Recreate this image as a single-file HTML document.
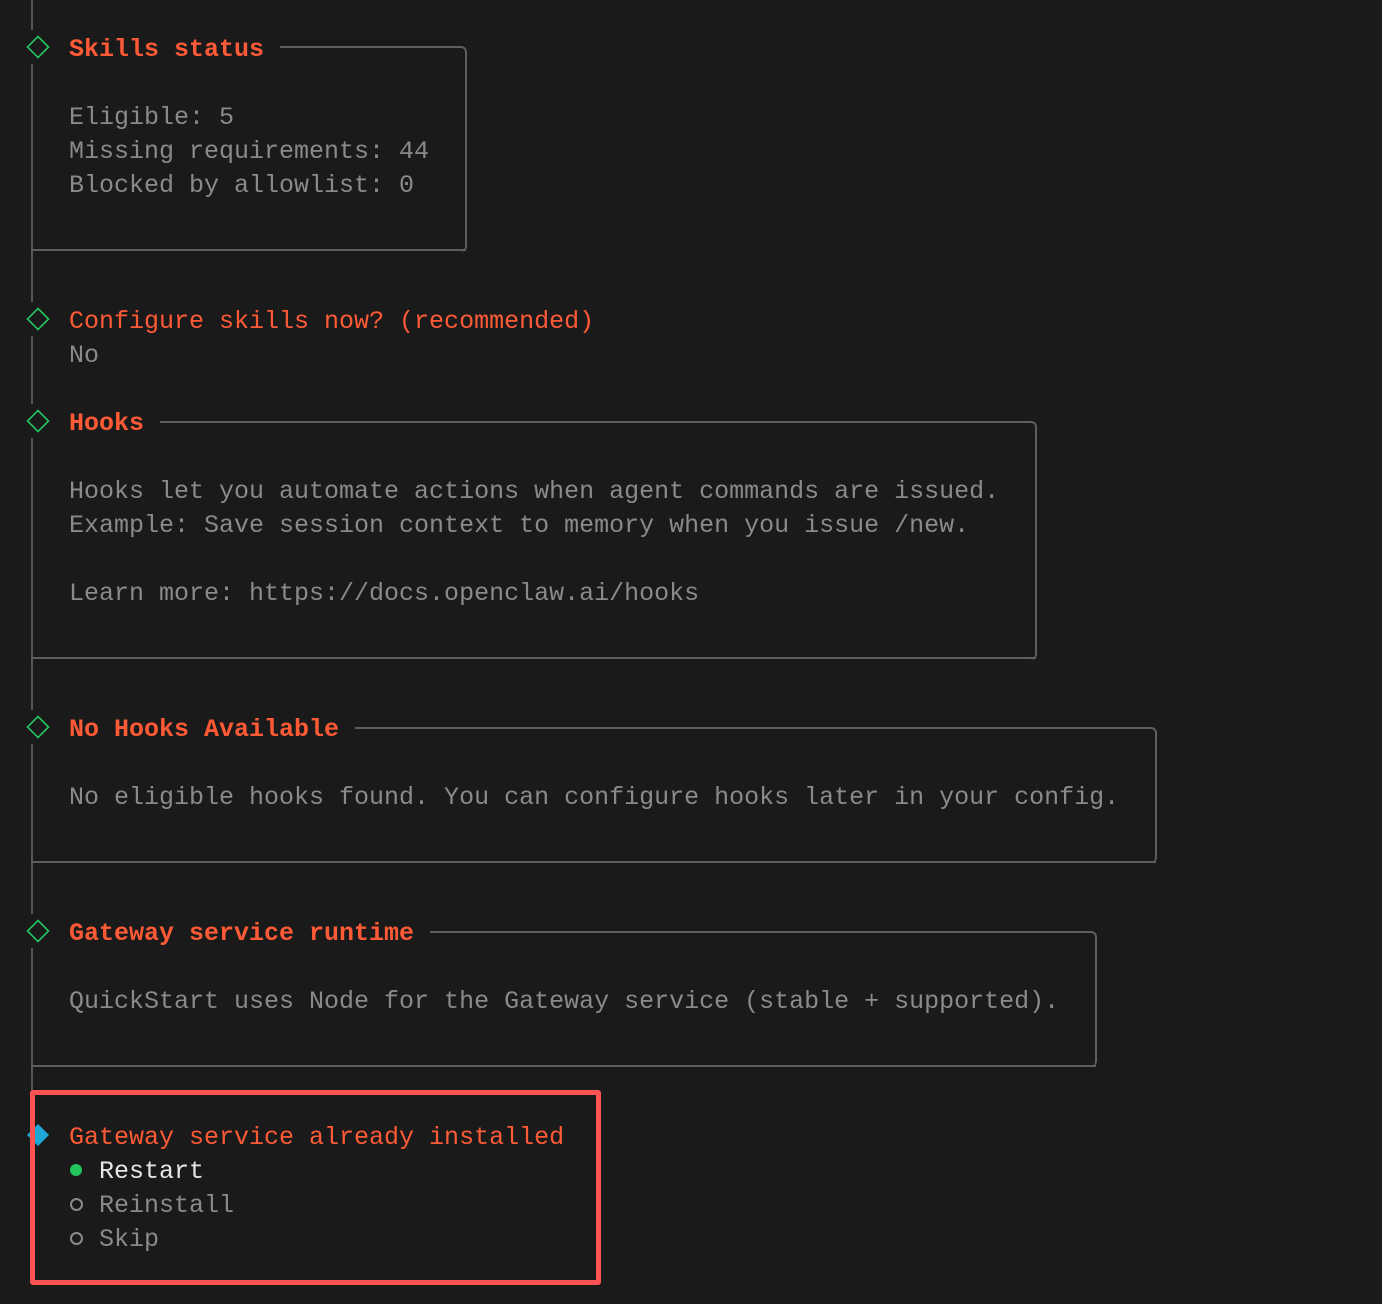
<!DOCTYPE html>
<html><head><meta charset="utf-8"><style>
html,body{margin:0;padding:0;background:#1a1a1a;width:1382px;height:1304px;overflow:hidden}
body{position:relative;font-family:"Liberation Mono",monospace;font-size:25px}
.t{position:absolute;left:69px;line-height:34px;white-space:pre;color:#8a8a8a}
.o{color:#ff5a36}.b{font-weight:bold}
.v{position:absolute;left:31px;width:2px;background:#555}
.box{position:absolute;border:2px solid #5e5e5e;border-left:none;border-radius:0 6px 6px 0}
.bl{position:absolute;left:31px;height:2px;background:#5e5e5e}
svg.d{position:absolute}
.c{position:absolute;left:70px;width:9px;height:9px;border:2px solid #8a8a8a;border-radius:50%}
</style></head><body>
<div class="v" style="top:0;height:30px"></div>
<div class="v" style="top:64px;height:238px"></div>
<div class="v" style="top:336px;height:68px"></div>
<div class="v" style="top:438px;height:272px"></div>
<div class="v" style="top:744px;height:170px"></div>
<div class="v" style="top:948px;height:170px"></div>
<div class="v" style="top:1152px;height:120px"></div>

<div class="box" style="left:280px;top:46px;width:185px;height:204px;border-bottom:none"></div>
<div class="bl" style="top:249px;width:435px"></div>
<div class="box" style="left:160px;top:421px;width:875px;height:237px;border-bottom:none"></div>
<div class="bl" style="top:657px;width:1005px"></div>
<div class="box" style="left:355px;top:727px;width:800px;height:134px;border-bottom:none"></div>
<div class="bl" style="top:861px;width:1125px"></div>
<div class="box" style="left:430px;top:931px;width:665px;height:134px;border-bottom:none"></div>
<div class="bl" style="top:1065px;width:1065px"></div>

<svg class="d" style="left:26px;top:35px" width="24" height="24"><path d="M12 1.5 L22.5 12 L12 22.5 L1.5 12Z" fill="none" stroke="#22c55e" stroke-width="1.6"/></svg>
<svg class="d" style="left:26px;top:307px" width="24" height="24"><path d="M12 1.5 L22.5 12 L12 22.5 L1.5 12Z" fill="none" stroke="#22c55e" stroke-width="1.6"/></svg>
<svg class="d" style="left:26px;top:409px" width="24" height="24"><path d="M12 1.5 L22.5 12 L12 22.5 L1.5 12Z" fill="none" stroke="#22c55e" stroke-width="1.6"/></svg>
<svg class="d" style="left:26px;top:715px" width="24" height="24"><path d="M12 1.5 L22.5 12 L12 22.5 L1.5 12Z" fill="none" stroke="#22c55e" stroke-width="1.6"/></svg>
<svg class="d" style="left:26px;top:919px" width="24" height="24"><path d="M12 1.5 L22.5 12 L12 22.5 L1.5 12Z" fill="none" stroke="#22c55e" stroke-width="1.6"/></svg>
<svg class="d" style="left:26px;top:1123px" width="24" height="24"><path d="M12 1 L23 12 L12 23 L1 12Z" fill="#1ea7d4"/></svg>

<div class="t o b" style="top:33px">Skills status</div>
<div class="t" style="top:101px">Eligible: 5
Missing requirements: 44
Blocked by allowlist: 0</div>
<div class="t o" style="top:305px">Configure skills now? (recommended)</div>
<div class="t" style="top:339px">No</div>
<div class="t o b" style="top:407px">Hooks</div>
<div class="t" style="top:475px">Hooks let you automate actions when agent commands are issued.
Example: Save session context to memory when you issue /new.

Learn more: https://docs.openclaw.ai/hooks</div>
<div class="t o b" style="top:713px">No Hooks Available</div>
<div class="t" style="top:781px">No eligible hooks found. You can configure hooks later in your config.</div>
<div class="t o b" style="top:917px">Gateway service runtime</div>
<div class="t" style="top:985px">QuickStart uses Node for the Gateway service (stable + supported).</div>
<div class="t o" style="top:1121px">Gateway service already installed</div>
<div style="position:absolute;left:70px;top:1164px;width:12px;height:12px;border-radius:50%;background:#22c55e"></div>
<div class="t" style="top:1155px;color:#e6e6e6">  Restart</div>
<div class="c" style="top:1198px"></div>
<div class="c" style="top:1232px"></div>
<div class="t" style="top:1189px">  Reinstall
  Skip</div>

<div style="position:absolute;left:30px;top:1090px;width:561px;height:185px;border:5px solid #ff5252;border-radius:3px"></div>
</body></html>
